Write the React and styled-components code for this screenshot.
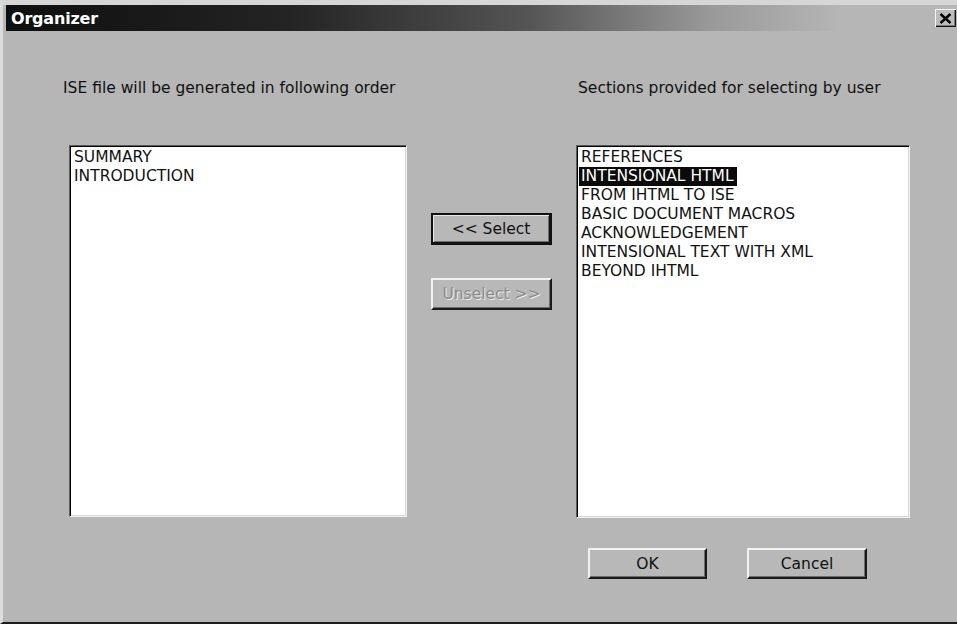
import React from 'react';
import styled, { createGlobalStyle, css } from 'styled-components';

const GlobalStyle = createGlobalStyle`
  html, body {
    margin: 0;
    padding: 0;
    background: #b6b6b6;
  }
  body {
    font-family: "DejaVu Sans", "Liberation Sans", sans-serif;
    color: #111;
  }
`;

const Window = styled.div`
  box-sizing: border-box;
  width: 957px;
  height: 624px;
  background: #b6b6b6;
  border-top: 5px solid #d6d6d6;
  border-left: 3px solid #dcdcdc;
  border-bottom: 2px solid #1c1c1c;
  padding-left: 3px;
  display: flex;
  flex-direction: column;
`;

const TitleBar = styled.div`
  height: 26px;
  display: flex;
  align-items: center;
  padding-left: 5px;
  background: linear-gradient(
    to right,
    #0e0e0e 0%,
    #242424 30%,
    #555 55%,
    #999 74%,
    #b6b6b6 88%
  );
`;

const Title = styled.span`
  font-family: "DejaVu Sans", sans-serif;
  font-weight: bold;
  font-size: 16px;
  color: #fff;
  letter-spacing: -0.2px;
`;

const CloseButton = styled.button`
  margin-left: auto;
  margin-right: 1px;
  width: 21px;
  height: 18px;
  padding: 0;
  display: flex;
  align-items: center;
  justify-content: center;
  background: #bdbdbd;
  border: none;
  box-shadow: inset 1px 1px 0 #f4f4f4, inset -1px -1px 0 #111, inset -2px -2px 0 #7a7a7a;
`;

const Body = styled.div`
  display: grid;
  grid-template-columns: 344px 121px 334px;
  column-gap: 24px;
  padding: 48px 0 0 57px;
`;

const Column = styled.div`
  display: flex;
  flex-direction: column;
`;

const Label = styled.div`
  font-size: 15.5px;
  line-height: 18px;
  white-space: nowrap;
  padding-left: ${(p) => p.$indent || 0}px;
`;

const ListBox = styled.div`
  box-sizing: border-box;
  margin-top: 48px;
  margin-left: ${(p) => p.$offset || 0}px;
  width: ${(p) => p.$width}px;
  height: ${(p) => p.$height}px;
  background: #fff;
  border-top: 1px solid #5a5a5a;
  border-left: 1px solid #5a5a5a;
  border-right: 1px solid #f2f2f2;
  border-bottom: 1px solid #f2f2f2;
  box-shadow: inset 1px 1px 0 #000, inset -1px -1px 0 #d8d8d8;
  padding: 2px 2px 0 2px;
`;

const Item = styled.div`
  width: fit-content;
  padding: 0 3px 0 2px;
  font-size: 15.5px;
  line-height: 19px;
  white-space: nowrap;
  ${(p) =>
    p.$selected &&
    css`
      background: #0a0a0a;
      color: #fff;
    `}
`;

const ButtonStack = styled.div`
  display: flex;
  flex-direction: column;
  gap: 33px;
  padding-top: 134px;
`;

const Button = styled.button`
  box-sizing: border-box;
  width: ${(p) => p.$width || 121}px;
  height: ${(p) => p.$height || 32}px;
  padding: 0;
  font-family: "DejaVu Sans", "Liberation Sans", sans-serif;
  font-size: 15.5px;
  color: #111;
  background: #b8b8b8;
  border-top: 2px solid #f2f2f2;
  border-left: 2px solid #f2f2f2;
  border-right: 2px solid #1a1a1a;
  border-bottom: 2px solid #1a1a1a;
  box-shadow: inset -1px -1px 0 #6e6e6e;

  ${(p) =>
    p.$default &&
    css`
      border: 2px solid #111;
      border-right-width: 3px;
      border-bottom-width: 3px;
      box-shadow: inset 1px 1px 0 #e8e8e8, inset -1px -1px 0 #6e6e6e;
    `}

  &:disabled {
    color: #8c8c8c;
    text-shadow: 1px 1px 0 #ececec;
  }
`;

const ButtonRow = styled.div`
  display: flex;
  gap: 40px;
  margin-top: 30px;
  padding-left: 12px;
`;

const leftItems = ['SUMMARY', 'INTRODUCTION'];

const rightItems = [
  'REFERENCES',
  'INTENSIONAL HTML',
  'FROM IHTML TO ISE',
  'BASIC DOCUMENT MACROS',
  'ACKNOWLEDGEMENT',
  'INTENSIONAL TEXT WITH XML',
  'BEYOND IHTML',
];

const CloseIcon = () => (
  <svg width="13" height="11" viewBox="0 0 13 11">
    <path d="M1.5 1 L11.5 10 M11.5 1 L1.5 10" stroke="#000" strokeWidth="2.4" fill="none" />
  </svg>
);

export default function App() {
  return (
    <>
      <GlobalStyle />
      <Window>
        <TitleBar>
          <Title>Organizer</Title>
          <CloseButton aria-label="Close">
            <CloseIcon />
          </CloseButton>
        </TitleBar>
        <Body>
          <Column>
            <Label>ISE file will be generated in following order</Label>
            <ListBox $offset={6} $width={338} $height={372}>
              {leftItems.map((name) => (
                <Item key={name}>{name}</Item>
              ))}
            </ListBox>
          </Column>

          <ButtonStack>
            <Button $default>&lt;&lt; Select</Button>
            <Button disabled>Unselect &gt;&gt;</Button>
          </ButtonStack>

          <Column>
            <Label $indent={2}>Sections provided for selecting by user</Label>
            <ListBox $width={334} $height={373}>
              {rightItems.map((name) => (
                <Item key={name} $selected={name === 'INTENSIONAL HTML'}>
                  {name}
                </Item>
              ))}
            </ListBox>
            <ButtonRow>
              <Button $width={119} $height={31}>OK</Button>
              <Button $width={120} $height={31}>Cancel</Button>
            </ButtonRow>
          </Column>
        </Body>
      </Window>
    </>
  );
}
